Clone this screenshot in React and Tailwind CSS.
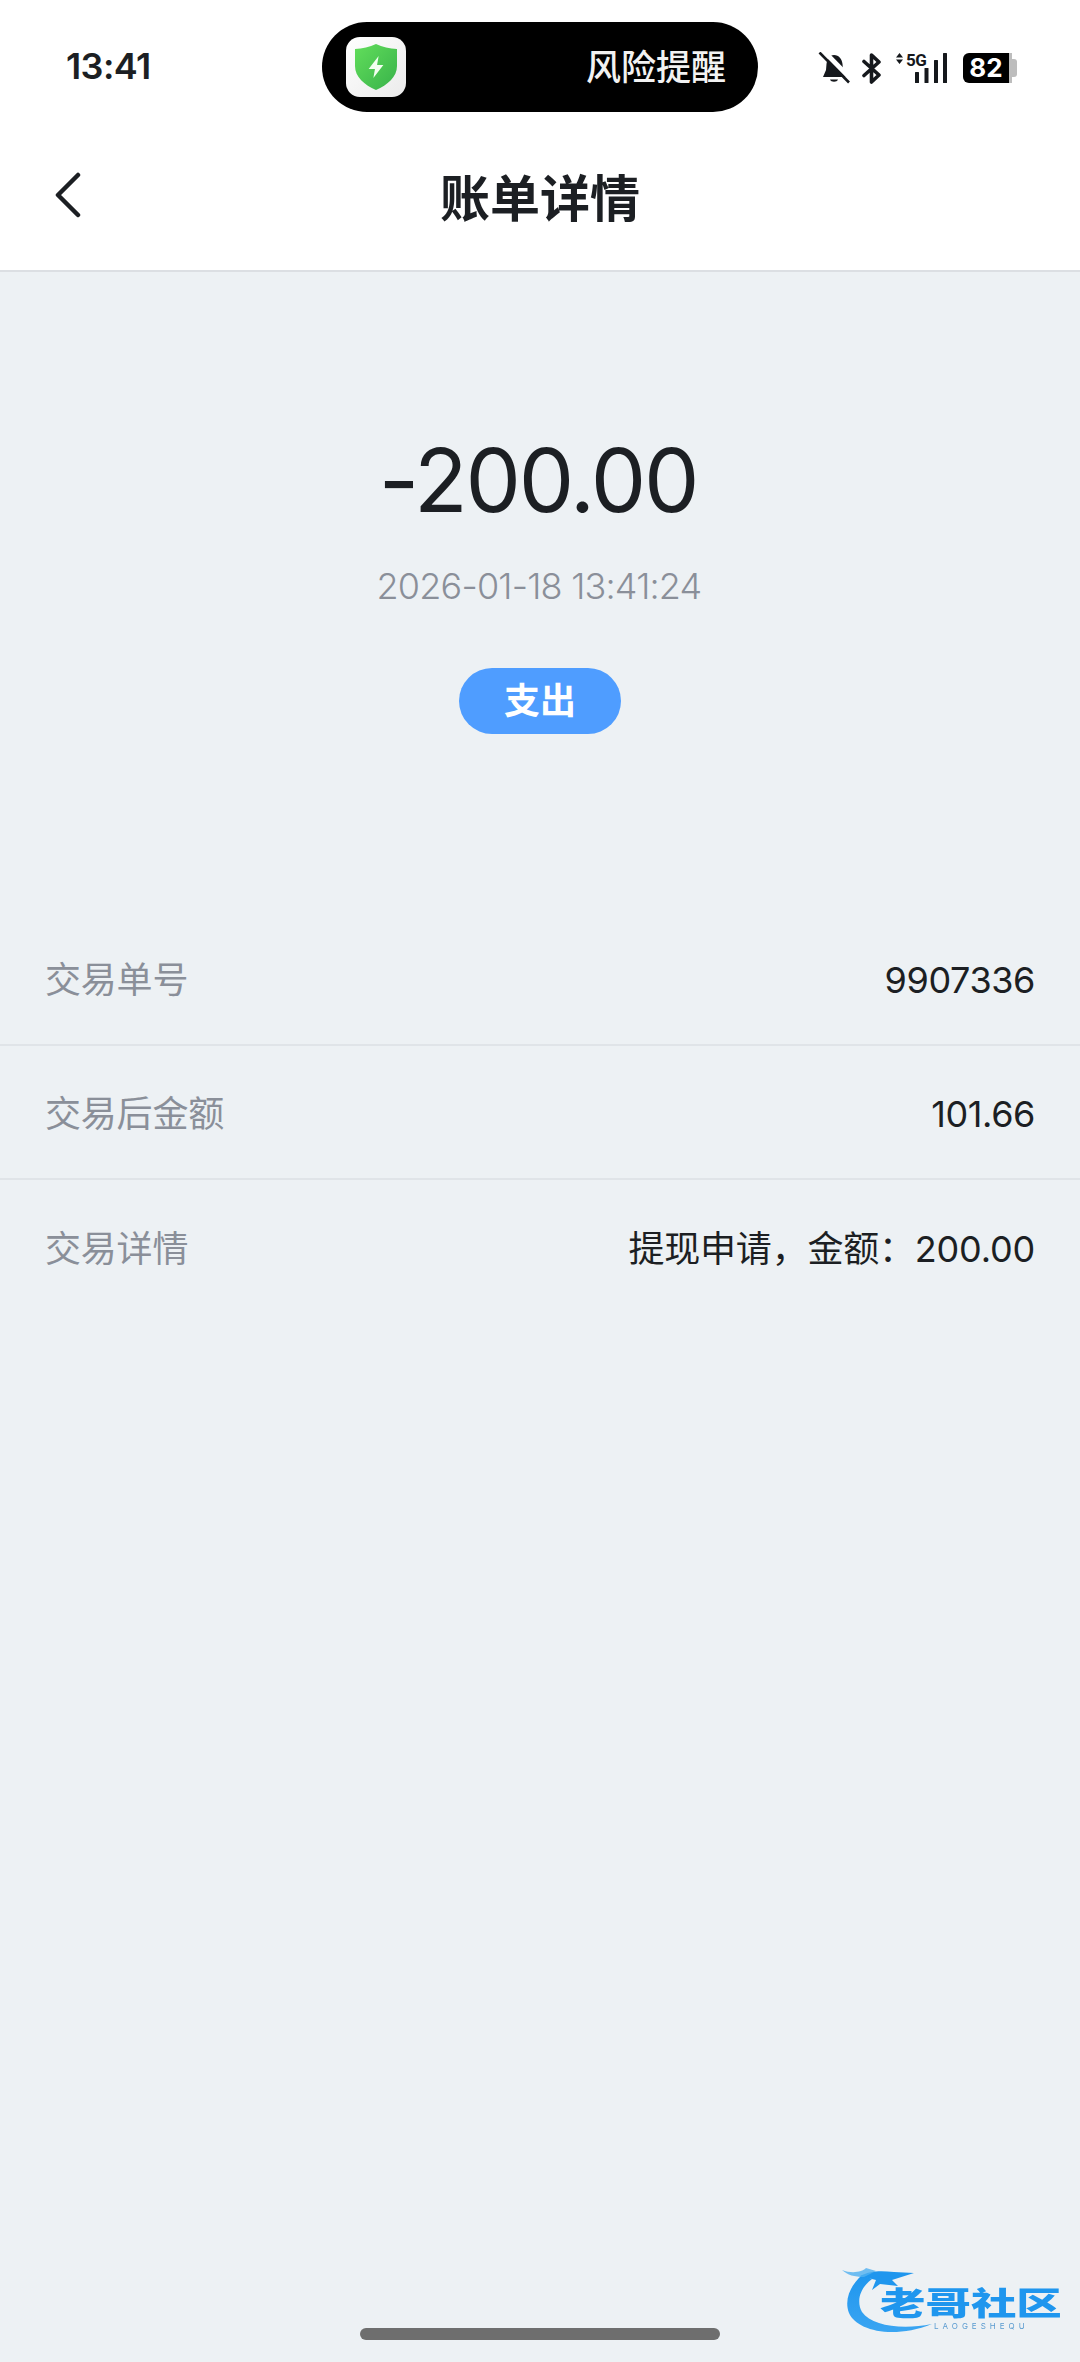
import React from "react";

function Shield() {
  return (
    <svg width="42" height="46" viewBox="0 0 40 46" preserveAspectRatio="none">
      <defs>
        <linearGradient id="sg" x1="0" y1="0" x2="1" y2="1">
          <stop offset="0" stopColor="#62de5b" />
          <stop offset="1" stopColor="#38b24a" />
        </linearGradient>
      </defs>
      <path d="M20 0 C26 3 33 4.500 40 5 L40 22 C40 33 31 41 20 46 C9 41 0 33 0 22 L0 5 C7 4.500 14 3 20 0 Z" fill="url(#sg)" />
      <path d="M22.500 12 L13 25 L19 25 L17.500 34 L27 21 L21 21 Z" fill="#f2fff0" />
    </svg>
  );
}

function BellOff() {
  return (
    <svg width="32" height="32" viewBox="0 0 32 32">
      <path d="M16 3 C21 3 24 7 24.500 12 L25 18 L28 25 L5 25 L8 18 L8.500 12 C9 7 11.500 3 16 3 Z" fill="#15181c" />
      <path d="M12 27.500 H20 C19 30.500 13 30.500 12 27.500 Z" fill="#15181c" />
      <path d="M2.500 0 L32 30" stroke="#fff" strokeWidth="5" transform="translate(2.500 -1.500)" />
      <path d="M1.500 0.500 L31 30.500" stroke="#15181c" strokeWidth="2.600" />
    </svg>
  );
}

function Bluetooth() {
  return (
    <svg width="20" height="31" viewBox="0 0 20 31" fill="none">
      <path d="M2 8.500 L17 22 L9.500 29 V2 L17 9 L2 22.500" stroke="#15181c" strokeWidth="3.600" strokeLinejoin="round" strokeLinecap="round" />
    </svg>
  );
}

function Signal() {
  return (
    <div className="relative h-[31px] w-[52px]">
      <svg width="52" height="31" viewBox="0 0 52 31">
        <path d="M3.500 0 L7 4.500 H0 Z M3.500 11 L0 6.500 H7 Z" fill="#15181c" />
        <rect x="19" y="19" width="4" height="11" rx="0.500" fill="#15181c" />
        <rect x="28.500" y="15" width="4" height="15" rx="0.500" fill="#15181c" />
        <rect x="38" y="7" width="4" height="23" rx="0.500" fill="#15181c" />
        <rect x="47" y="0" width="4" height="30" rx="0.500" fill="#15181c" />
      </svg>
      <span className="absolute top-[-2px] left-[10px] font-['Roboto',sans-serif] text-[17px] leading-[18px] font-bold tracking-[-0.4px] text-[#15181c]">5G</span>
    </div>
  );
}

function Battery() {
  return (
    <div className="flex h-[30px] w-[57px] items-center">
      <div className="flex h-full w-[46px] items-center justify-center rounded-l-[6px] bg-black text-[26px] leading-none font-bold text-white">82</div>
      <div className="h-full w-[3px] bg-[#bdbdbd]" />
      <div className="h-[18px] w-[5px] rounded-r-[3px] bg-[#bdbdbd]" />
    </div>
  );
}

function Dragon() {
  return (
    <svg width="150" height="74" viewBox="0 0 150 74">
      <defs>
        <linearGradient id="dg" x1="0" y1="0" x2="0" y2="1">
          <stop offset="0" stopColor="#1f96ee" />
          <stop offset="1" stopColor="#3aa5f2" />
        </linearGradient>
      </defs>
      <path d="M20 13 C8 24 2 38 7 51 C14 68 50 78 90 62 C60 68 30 64 20 50 C14 39 18 26 30 17 Z" fill="url(#dg)" />
      <path d="M18 14 C30 8 40 9 52 10 L72 11 L50 18 L56 24 L38 22 L30 28 L34 18 Z" fill="#1f96ee" />
      <path d="M0 8 C10 12 20 10 24 6 L34 9 L22 15 C12 15 6 13 0 8 Z" fill="#4fb0f0" opacity="0.8" />
    </svg>
  );
}

function Row({ label, value, last }) {
  return (
    <div className={`flex h-[134px] items-center justify-between px-[45px] pt-[4px] ${last ? "" : "border-b-2 border-[#e0e4e8]"}`}>
      <span className="text-[36px] tracking-[-0.2px] text-[#8a8f99]">{label}</span>
      <span className={`text-[36px] text-[#1c1f23] ${last ? "tracking-[-0.2px]" : "tracking-[-0.4px]"}`}>{value}</span>
    </div>
  );
}

export default function App() {
  return (
    <div className="relative flex h-[2362px] w-[1080px] flex-col overflow-hidden bg-[#edf1f4] font-[Inter,'Noto_Sans_CJK_SC',sans-serif]">
      <header className="h-[272px] border-b-2 border-[#dcdfe3] bg-white">
        <div className="flex items-start pt-[22px]">
          <div className="w-[322px] pt-[22px] pl-[66px] text-[36px] leading-[44px] font-semibold tracking-[-0.6px] text-[#1c1f23]">13:41</div>
          <div className="flex h-[90px] w-[436px] items-center justify-between rounded-full bg-black pr-[32px] pl-[24px]">
            <div className="flex h-[60px] w-[60px] items-center justify-center rounded-[14px] bg-gradient-to-br from-white to-[#ebebeb]">
              <Shield />
            </div>
            <span className="text-[35px] leading-[50px] font-medium text-[#f2f2f2]">风险提醒</span>
          </div>
          <div className="flex flex-1 items-center pt-[30px] pl-[60px]">
            <BellOff />
            <div className="ml-[12px]"><Bluetooth /></div>
            <div className="ml-[14px]"><Signal /></div>
            <div className="ml-[15px]"><Battery /></div>
          </div>
        </div>
        <div className="relative mt-[45px] flex h-[84px] items-center justify-center">
          <svg className="absolute top-[15px] left-[54px]" width="28" height="46" viewBox="0 0 28 46" fill="none">
            <path d="M24 3 L4 23 L24 43" stroke="#1c1f23" strokeWidth="4.500" strokeLinecap="round" strokeLinejoin="round" />
          </svg>
          <h1 className="text-[50px] leading-[60px] font-bold text-[#1c1f23]">账单详情</h1>
        </div>
      </header>

      <section className="flex flex-col items-center pt-[158px]">
        <div className="mr-[4px] text-[88px] leading-[100px] font-normal tracking-[-2.2px] text-[#1c1f23]">-200.00</div>
        <div className="mt-[34px] mr-[2px] text-[36px] leading-[44px] font-light tracking-[-0.8px] text-[#8a8f99]">2026-01-18 13:41:24</div>
        <div className="mt-[60px] flex h-[66px] w-[162px] items-center justify-center rounded-full bg-[#4f9dff] text-[36px] font-bold text-white">支出</div>
      </section>

      <section className="mt-[178px]">
        <Row label="交易单号" value="9907336" />
        <Row label="交易后金额" value="101.66" />
        <Row label="交易详情" value="提现申请，金额：200.00" last />
      </section>

      <div className="mt-auto flex justify-center pb-[22px]">
        <div className="h-[12px] w-[360px] rounded-full bg-[#6e6e6e]" />
      </div>

      <div className="absolute top-[2262px] left-[842px] h-[80px] w-[230px] blur-[0.5px]">
        <Dragon />
        <span className="absolute top-[24px] left-[38px] origin-left scale-x-[1.42] text-[32px] leading-[36px] font-black whitespace-nowrap text-[#1f96ee]">老哥社区</span>
        <span className="absolute top-[60px] left-[92px] text-[8px] leading-[9px] tracking-[4px] whitespace-nowrap text-[#5a9bd0]">LAOGESHEQU</span>
      </div>
    </div>
  );
}
